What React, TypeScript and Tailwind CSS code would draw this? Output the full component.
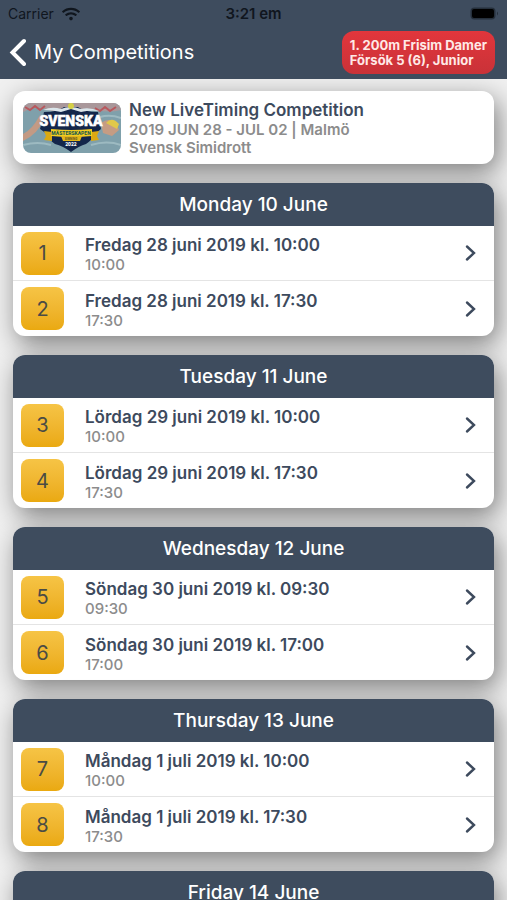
import { FaWifi } from "react-icons/fa"


export default function App() {
  return (
    <div className="flex h-screen flex-col overflow-hidden bg-[#f0f0f0] font-['Inter',sans-serif] text-[#3d4a5d]">
      <Header />
      <main className="flex min-h-0 flex-1 flex-col gap-[19px] overflow-y-auto px-[13px] pt-3 [scrollbar-width:none]">
        <CompetitionCard />
        {days.map(day => (
          <DayCard key={day.title} day={day} />
        ))}
      </main>
    </div>
  )
}


function Header() {
  return (
    <header className="shrink-0 bg-[#3e4c5e]">
      <div className="grid h-7 grid-cols-3 items-center px-2 text-sm leading-5 text-[#10161e]">
        <div className="flex items-center gap-2">
          Carrier
          <FaWifi className="h-4 w-[18px]" />
        </div>
        <div className="text-center text-[15px] font-semibold">3:21 em</div>
        <div className="flex justify-end">
          <BatteryIcon />
        </div>
      </div>
      <div className="flex h-[51px] items-start justify-between pl-2 pr-3">
        <button type="button" className="flex h-12 items-center gap-2 text-xl text-white">
          <svg width="18" height="28" viewBox="0 0 18 28" fill="none" stroke="currentColor" strokeWidth="4" strokeLinecap="round">
            <path d="M16 3 4.500 14.500 16 26" />
          </svg>
          My Competitions
        </button>
        <button type="button" className="mt-[3px] h-[43px] rounded-xl bg-linear-to-b from-[#e2363c] to-[#c93238] px-2 text-left text-[13px] leading-[15px] font-bold text-[#ffe9e6]">
          1. 200m Frisim Damer<br />
          Försök 5 (6), Junior
        </button>
      </div>
    </header>
  )
}


function CompetitionCard() {
  return (
    <section className="flex h-[73px] shrink-0 items-center gap-2 rounded-xl bg-white pr-3 pl-[10px] shadow-[4px_8px_26px_rgba(0,0,0,0.48)]">
      <CompetitionLogo />
      <div className="text-[15px] leading-[18px] font-semibold text-[#8c8c8c]">
        <h1 className="text-[17px] leading-[22px] text-[#3d4a5d]">New LiveTiming Competition</h1>
        <p>2019 JUN 28 - JUL 02 | Malmö</p>
        <p>Svensk Simidrott</p>
      </div>
    </section>
  )
}


function DayCard({ day }: { day: Day }) {
  return (
    <section className="shrink-0 rounded-xl bg-white shadow-[4px_8px_26px_rgba(0,0,0,0.48)]">
      <h2 className="rounded-t-xl bg-[#3e4c5e] text-center text-[19px] leading-[43px] font-medium text-white">{day.title}</h2>
      <ul className="divide-y divide-[#e4e4e4]">
        {day.sessions.map(session => (
          <li key={session.number} className="h-[55px]">
            <a href={`#session-${session.number}`} className="flex h-full items-center pr-4 pl-2">
              <span className="flex size-[43px] items-center justify-center rounded-lg bg-linear-to-b from-[#f6c445] to-[#eaa90f] text-xl text-[#4a4b45]">
                {session.number}
              </span>
              <span className="ml-[21px] flex-1 pt-1">
                <span className="block text-[17px] leading-5 font-semibold">{session.title}</span>
                <span className="block text-[15px] leading-5 font-medium text-[#8c8c8c]">{session.time}</span>
              </span>
              <ChevronIcon />
            </a>
          </li>
        ))}
      </ul>
    </section>
  )
}


function BatteryIcon() {
  return (
    <svg width="29" height="14" viewBox="0 0 29 14">
      <rect x="0.500" y="0.500" width="25" height="12" rx="4" fill="#252f3b" />
      <rect x="2" y="2" width="22" height="9" rx="2" fill="#000" />
      <path d="M27 4.500q2 2 0 4z" fill="#252f3b" />
    </svg>
  )
}


function ChevronIcon() {
  return (
    <svg width="16" height="20" viewBox="0 0 16 20" fill="none" stroke="currentColor" strokeWidth="2.400">
      <path d="m5 3.500 7 6.500-7 6.500" strokeLinecap="round" />
    </svg>
  )
}


function CompetitionLogo() {
  return (
    <svg width="98" height="50" viewBox="0 0 98 50" className="shrink-0 rounded-lg">
      <rect width="98" height="50" fill="#7fa0ab" />
      <path d="M0 0h98v7q-12 3-24 0T50 8 26 7 0 9z" fill="#a9979a" />
      <path d="M2 4l5 3 5-4 5 4 5-4M72 5l5 3 5-4 5 4 6-4" stroke="#b9585d" strokeWidth="2" fill="none" />
      <path d="M0 31q9-4 17-19l5 3Q15 31 0 38z" fill="#c39a84" />
      <path d="M78 20q8-6 15 0l3 7-7 6-9-3z" fill="#c59c83" />
      <path d="M83 20q6-7 13 1l-2 5z" fill="#e0c84a" />
      <path d="M0 42q15-4 28 0M68 42q16-5 30 0M77 14q10-3 21 1" stroke="#9dbac1" strokeWidth="2" fill="none" />
      <path d="M21 9q14 0 20-5h14q6 5 20 5l3 17-6 5q-3 6-9 10-7 2-15 8-8-6-16-8-6-4-8-10l-7-5z" fill="#14264a" />
      <path d="M20 7q9-4 18-1 9-4 20 0 9-2 18 2-10-1-18 1l-10-3-10 3q-8-2-18-2z" fill="#dbe5ea" />
      <circle cx="48" cy="3" r="3" fill="#d5cf46" />
      <path d="m21 28 8 1v9l-8-1 2-4zM76 28l-8 1v9l8-1-2-4z" fill="#dba913" />
      <path d="M28 26q20 2 41 0v7q-20 2-41 0z" fill="#f3cc21" />
      <path d="M38 33h21l-2 5H40z" fill="#e2b61b" />
      <text x="48" y="23" textAnchor="middle" fontSize="14" fontWeight="900" fill="#fff" stroke="#fff" strokeWidth="0.500" fontFamily="Roboto, sans-serif">SVENSKA</text>
      <text x="48" y="32" textAnchor="middle" fontSize="5" fontWeight="800" fill="#1d5b4c" fontFamily="Roboto, sans-serif">MÄSTERSKAPEN</text>
      <text x="48" y="37" textAnchor="middle" fontSize="3" fontWeight="700" fill="#5f5520" fontFamily="Roboto, sans-serif">SIMNING</text>
      <text x="48" y="43" textAnchor="middle" fontSize="5" fontWeight="800" fill="#fff" fontFamily="Roboto, sans-serif">2022</text>
    </svg>
  )
}


type Session = { number: number; title: string; time: string }
type Day = { title: string; sessions: Session[] }

const days: Day[] = [
  {
    title: 'Monday 10 June',
    sessions: [
      { number: 1, title: 'Fredag 28 juni 2019 kl. 10:00', time: '10:00' },
      { number: 2, title: 'Fredag 28 juni 2019 kl. 17:30', time: '17:30' },
    ],
  },
  {
    title: 'Tuesday 11 June',
    sessions: [
      { number: 3, title: 'Lördag 29 juni 2019 kl. 10:00', time: '10:00' },
      { number: 4, title: 'Lördag 29 juni 2019 kl. 17:30', time: '17:30' },
    ],
  },
  {
    title: 'Wednesday 12 June',
    sessions: [
      { number: 5, title: 'Söndag 30 juni 2019 kl. 09:30', time: '09:30' },
      { number: 6, title: 'Söndag 30 juni 2019 kl. 17:00', time: '17:00' },
    ],
  },
  {
    title: 'Thursday 13 June',
    sessions: [
      { number: 7, title: 'Måndag 1 juli 2019 kl. 10:00', time: '10:00' },
      { number: 8, title: 'Måndag 1 juli 2019 kl. 17:30', time: '17:30' },
    ],
  },
  {
    title: 'Friday 14 June',
    sessions: [],
  },
]
